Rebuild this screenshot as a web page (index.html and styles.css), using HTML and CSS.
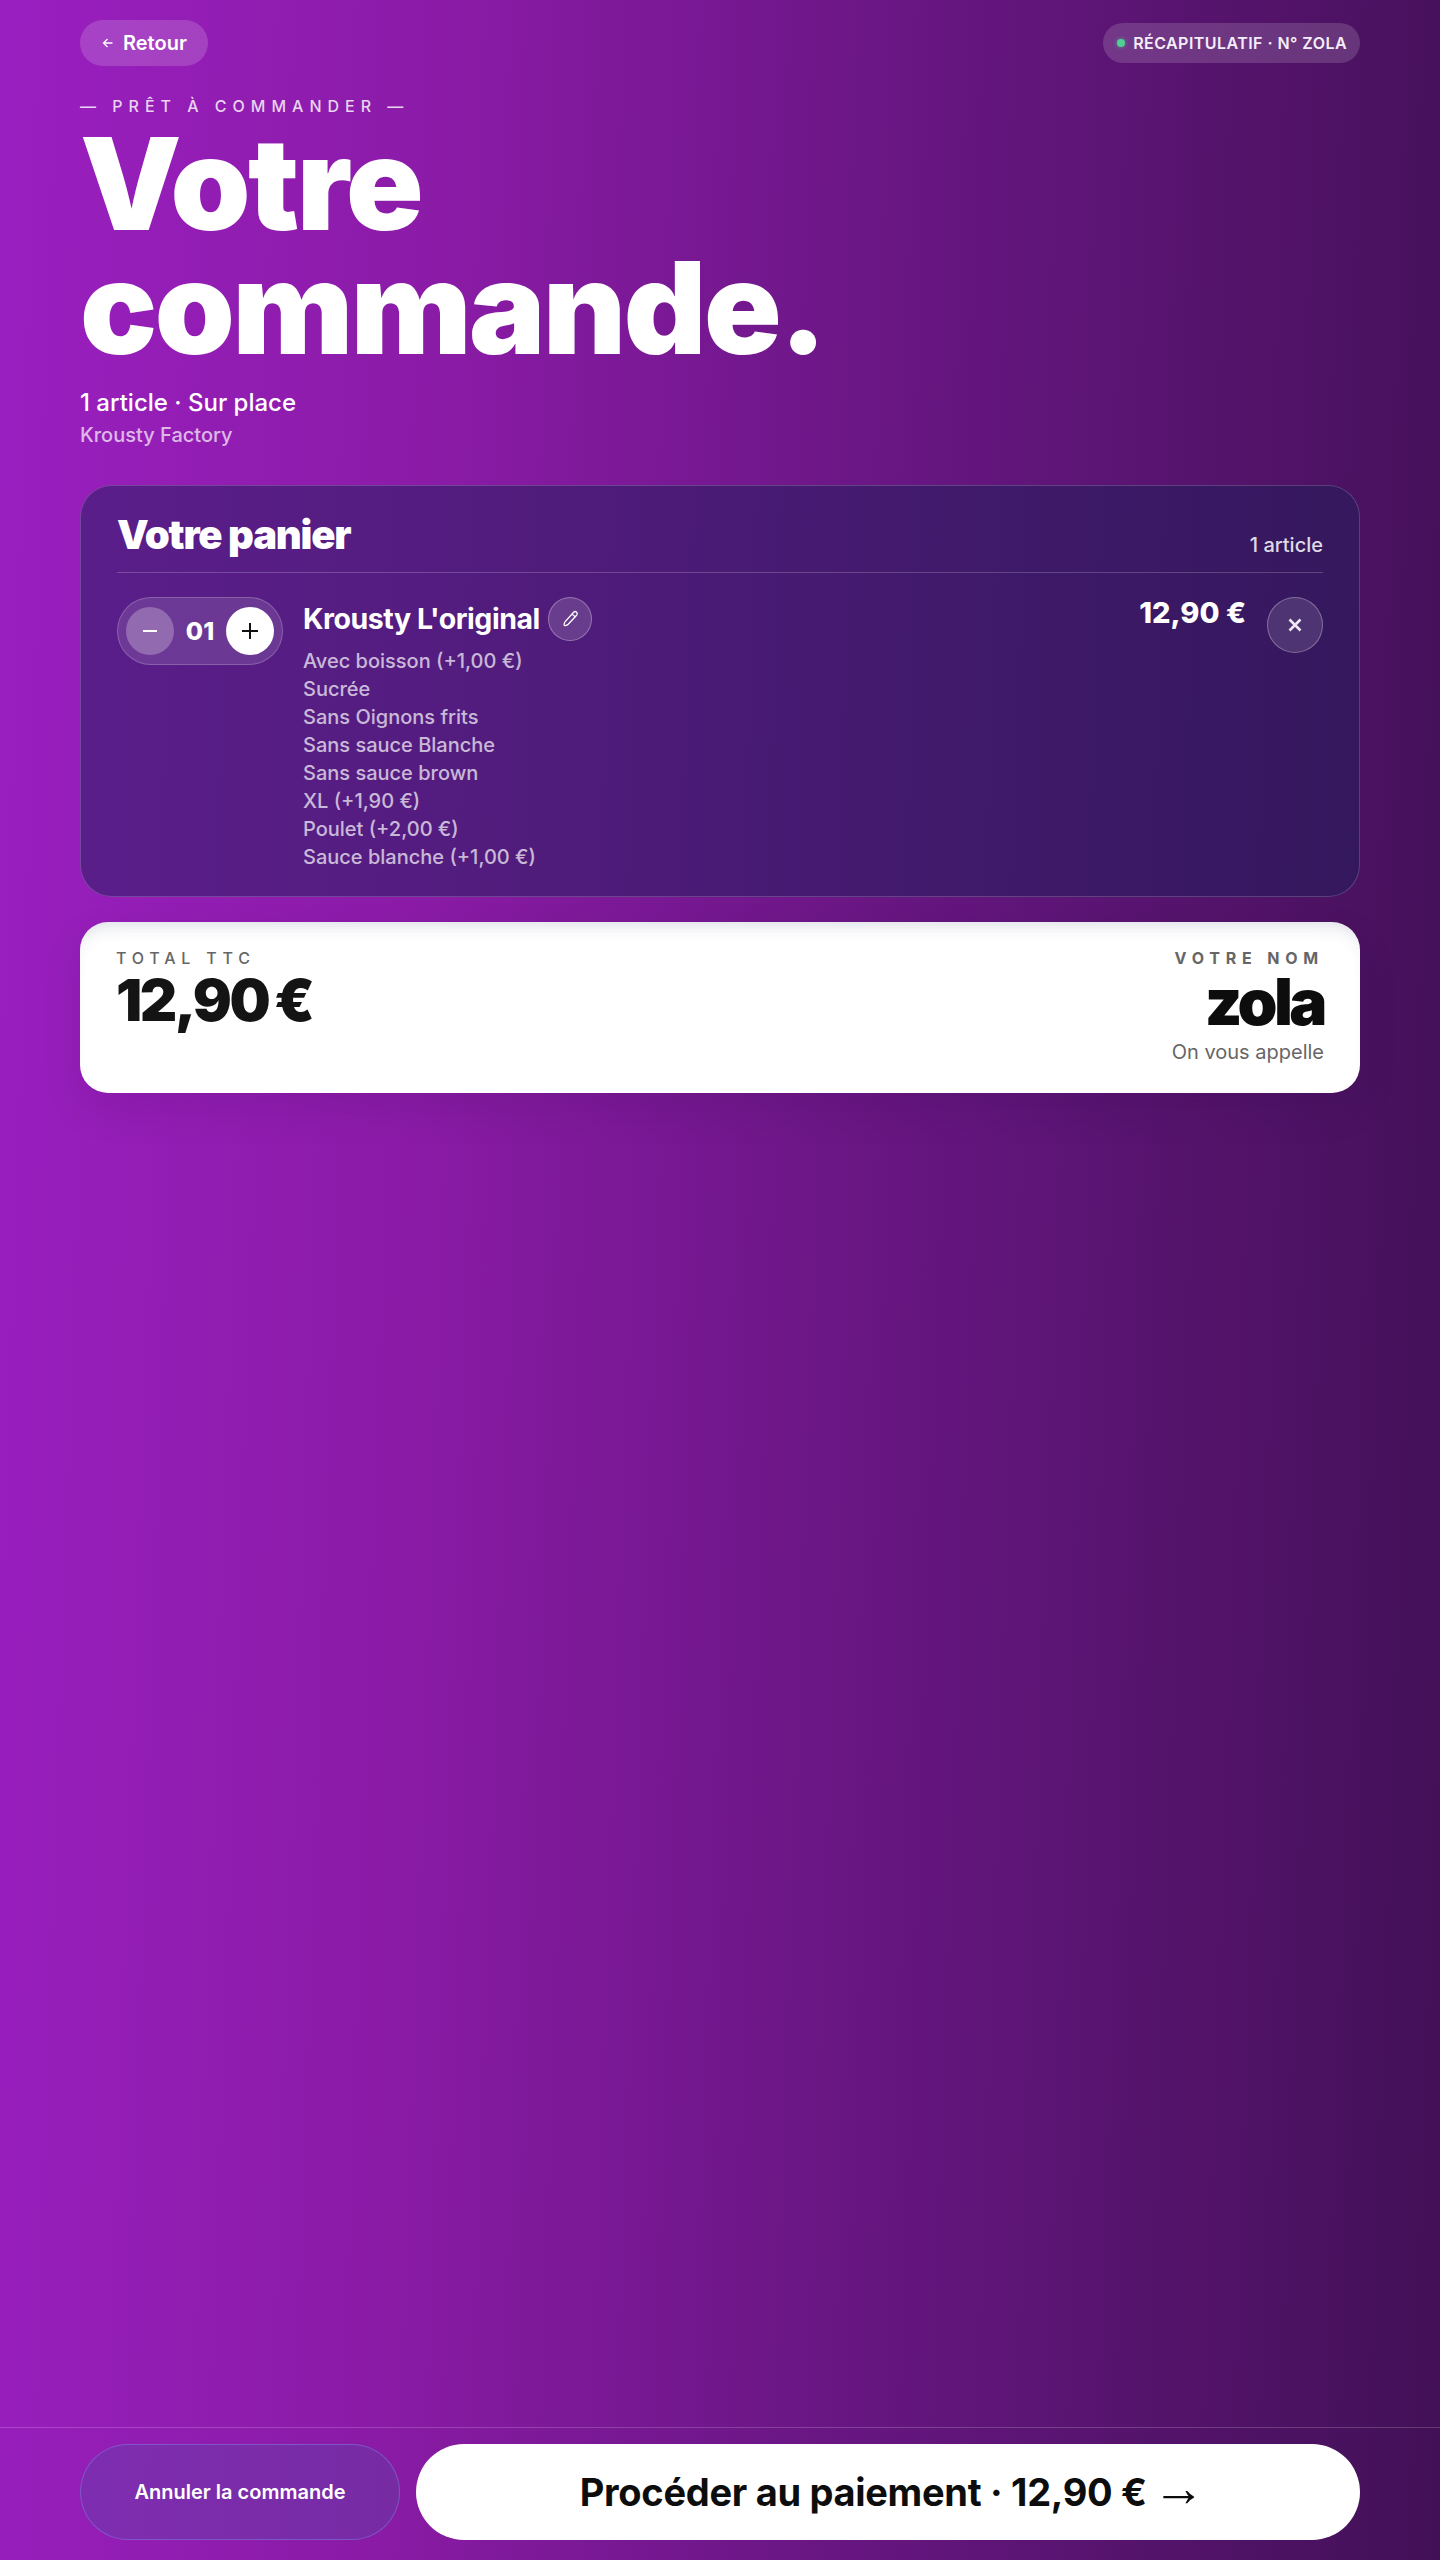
FILE: index.html
```html
<!DOCTYPE html>
<html lang="fr">
<head>
<meta charset="utf-8">
<title>Votre commande</title>
<link rel="stylesheet" href="styles.css">
</head>
<body>
<div class="page">
  <main class="main">
    <div class="topbar">
      <button class="back"><svg class="back-icon" viewBox="0 0 14 14" width="14" height="14"><path d="M11.500 7H2.500M6.500 3 2.500 7l4 4" fill="none" stroke="currentColor" stroke-width="1.300"/></svg>Retour</button>
      <div class="pill"><span class="dot"></span>RÉCAPITULATIF · N° ZOLA</div>
    </div>
    <div class="eyebrow">— PRÊT À COMMANDER —</div>
    <h1 class="title">Votre<br>commande.</h1>
    <p class="sub">1 article · Sur place</p>
    <p class="shop">Krousty Factory</p>

    <section class="cart">
      <header class="cart-head">
        <h2 class="cart-title">Votre panier</h2>
        <span class="cart-count">1 article</span>
      </header>
      <div class="item">
        <div class="qty">
          <button class="qty-btn minus"><svg viewBox="0 0 16 16" width="16" height="16"><path d="M1 8h14" stroke="currentColor" stroke-width="2" fill="none"/></svg></button>
          <span class="qty-num">01</span>
          <button class="qty-btn plus"><svg viewBox="0 0 16 16" width="16" height="16"><path d="M0 8h16M8 0v16" stroke="currentColor" stroke-width="2" fill="none"/></svg></button>
        </div>
        <div class="details">
          <div class="name-row">
            <span class="name">Krousty L'original</span>
            <button class="edit"><svg viewBox="0 0 20 20" width="20" height="20"><path d="M13.600 3.200c.9-.8 2.200-.7 3 .1.8.8.8 2 0 2.900l-8.400 9c-1 1-3.300 1.800-3.900 1.200-.6-.6.1-2.900 1.100-4z" fill="none" stroke="currentColor" stroke-width="1.300"/><path d="M12 5l3.500 3.200" fill="none" stroke="currentColor" stroke-width="1.100"/></svg></button>
          </div>
          <ul class="options">
            <li>Avec boisson (+1,00 €)</li>
            <li>Sucrée</li>
            <li>Sans Oignons frits</li>
            <li>Sans sauce Blanche</li>
            <li>Sans sauce brown</li>
            <li>XL (+1,90 €)</li>
            <li>Poulet (+2,00 €)</li>
            <li>Sauce blanche (+1,00 €)</li>
          </ul>
        </div>
        <div class="price">12,90 €</div>
        <button class="remove"><svg viewBox="0 0 14 14" width="14" height="14"><path d="M1.500 1.500l11 11M12.500 1.500l-11 11" stroke="currentColor" stroke-width="2.600" fill="none"/></svg></button>
      </div>
    </section>

    <section class="total">
      <div class="total-left">
        <div class="label">TOTAL TTC</div>
        <div class="amount">12,90 €</div>
      </div>
      <div class="total-right">
        <div class="label label-strong">VOTRE NOM</div>
        <div class="customer">zola</div>
        <div class="call">On vous appelle</div>
      </div>
    </section>
  </main>

  <footer class="footer">
    <button class="cancel">Annuler la commande</button>
    <button class="pay">Procéder au paiement · 12,90 € <span class="arrow">→</span></button>
  </footer>
</div>
</body>
</html>
```
FILE: styles.css
```css
* { box-sizing: border-box; margin: 0; padding: 0; }
html, body { height: 100%; }
body {
  font-family: Inter, "Liberation Sans", sans-serif;
  background: linear-gradient(92deg, #9a1fc0 0%, #8a1ba6 30%, #661680 62%, #45115a 97%, #421056 100%);
  color: #fff;
}
button { font-family: inherit; border: 0; cursor: pointer; }
ul { list-style: none; }
.page { min-height: 2560px; display: flex; flex-direction: column; }
.main { flex: 1; padding: 20px 80px 0; }

.topbar { display: flex; justify-content: space-between; align-items: center; height: 46px; }
.back {
  display: flex; align-items: center; gap: 8px;
  height: 46px; padding: 0 21px;
  border-radius: 23px;
  background: rgba(255,255,255,.16);
  color: #fff; font-size: 20px; font-weight: 600;
}
.back-icon { flex: none; }
.pill {
  display: flex; align-items: center; gap: 8px;
  height: 40px; padding: 0 13px 0 14px;
  border-radius: 20px;
  background: rgba(255,255,255,.15);
  font-size: 16px; font-weight: 600; letter-spacing: .45px;
  color: #f5eefa;
}
.dot { width: 8px; height: 8px; border-radius: 50%; background: #4fd195; box-shadow: 0 0 4px rgba(79,209,149,.6); }

.eyebrow {
  margin-top: 30px;
  font-size: 16px; font-weight: 500; letter-spacing: 6px; line-height: 20px;
  color: rgba(255,255,255,.82);
}
.title {
  margin-top: 6px;
  font-family: Inter, "Liberation Sans", sans-serif;
  font-size: 128px; font-weight: 900; line-height: 124px; letter-spacing: -2.400px;
  color: #fff;
}
.sub { margin-top: 18px; font-size: 24px; font-weight: 500; line-height: 30px; }
.shop { margin-top: 3px; font-size: 20px; font-weight: 500; line-height: 28px; color: rgba(255,255,255,.7); }

.cart {
  margin-top: 36px;
  height: 412px;
  padding: 24px 36px 0;
  border: 1px solid rgba(255,255,255,.18);
  border-radius: 32px;
  background: rgba(30,30,90,.5);
}
.cart-head {
  display: flex; justify-content: space-between; align-items: flex-end;
  height: 63px; padding-bottom: 15px;
  border-bottom: 1px solid rgba(255,255,255,.2);
}
.cart-title {
  font-family: Inter, "Liberation Sans", sans-serif;
  font-size: 40px; font-weight: 900; line-height: 44px; letter-spacing: -1.200px;
}
.cart-count { font-size: 20px; font-weight: 500; color: rgba(255,255,255,.85); line-height: 24px; }

.item { display: flex; align-items: flex-start; margin-top: 24px; }
.qty {
  display: flex; align-items: center; justify-content: space-between;
  width: 166px; height: 68px; padding: 0 8px;
  border: 1px solid rgba(255,255,255,.2);
  border-radius: 34px;
  background: rgba(255,255,255,.12);
  flex: none;
}
.qty-btn { width: 48px; height: 48px; border-radius: 50%; display: flex; align-items: center; justify-content: center; }
.minus { background: rgba(255,255,255,.25); color: #fff; }
.plus { background: #fff; color: #111; }
.qty-num { font-size: 25px; font-weight: 800; }

.details { margin-left: 20px; flex: 1; }
.name-row { display: flex; align-items: center; gap: 8px; height: 44px; }
.name { font-size: 28.500px; font-weight: 700; letter-spacing: -.45px; margin-top: -2px; }
.edit {
  width: 44px; height: 44px; border-radius: 50%;
  display: flex; align-items: center; justify-content: center;
  background: rgba(255,255,255,.15);
  border: 1px solid rgba(255,255,255,.3);
  color: #fff;
}
.options { margin-top: 6px; font-size: 20px; font-weight: 500; line-height: 28px; color: rgba(255,255,255,.7); }

.price {
  font-size: 29px; font-weight: 800; line-height: 28px; margin-top: 2px; margin-right: 21px;
}
.remove {
  width: 56px; height: 56px; border-radius: 50%;
  display: flex; align-items: center; justify-content: center;
  background: rgba(255,255,255,.12);
  border: 1px solid rgba(255,255,255,.3);
  color: #f0e8f5;
}

.total {
  margin-top: 25px;
  height: 171px;
  padding: 28px 36px 0;
  display: flex; justify-content: space-between;
  border-radius: 28px;
  background: #fff;
  box-shadow: inset 0 14px 20px -14px rgba(40,50,100,.22), 0 16px 40px rgba(30,0,60,.1);
  color: #111;
}
.label { font-size: 16px; font-weight: 500; letter-spacing: 5.800px; line-height: 16px; color: #666; }
.label-strong { font-weight: 700; text-align: right; }
.amount {
  margin-top: 4px;
  font-family: Inter, "Liberation Sans", sans-serif;
  font-size: 58px; font-weight: 900; line-height: 60px; letter-spacing: -2.500px; word-spacing: -3px;
  color: #141414;
}
.total-right { text-align: right; }
.customer {
  margin-top: 6px;
  font-family: Inter, "Liberation Sans", sans-serif;
  font-size: 64px; font-weight: 900; line-height: 60px; letter-spacing: -3.500px;
  color: #0d0d0d;
}
.call { margin-top: 6px; font-size: 20px; color: #666; line-height: 28px; }

.footer {
  display: flex; gap: 16px;
  height: 133px; padding: 16px 80px 20px;
  border-top: 1px solid rgba(255,255,255,.18);
}
.cancel {
  width: 320px; height: 96px; border-radius: 48px;
  background: rgba(77,83,163,.3);
  border: 1px solid rgba(130,130,230,.5);
  color: #fff; font-size: 20px; font-weight: 600;
  flex: none;
}
.pay {
  flex: 1; height: 96px; border-radius: 48px;
  background: #fff; color: #0d0d0d;
  font-size: 38px; font-weight: 700; letter-spacing: -.3px;
}
.arrow { font-family: "Liberation Sans", sans-serif; font-weight: 400; font-size: 52px; line-height: 0; margin: 0 -8px 0 -3px; }
```
